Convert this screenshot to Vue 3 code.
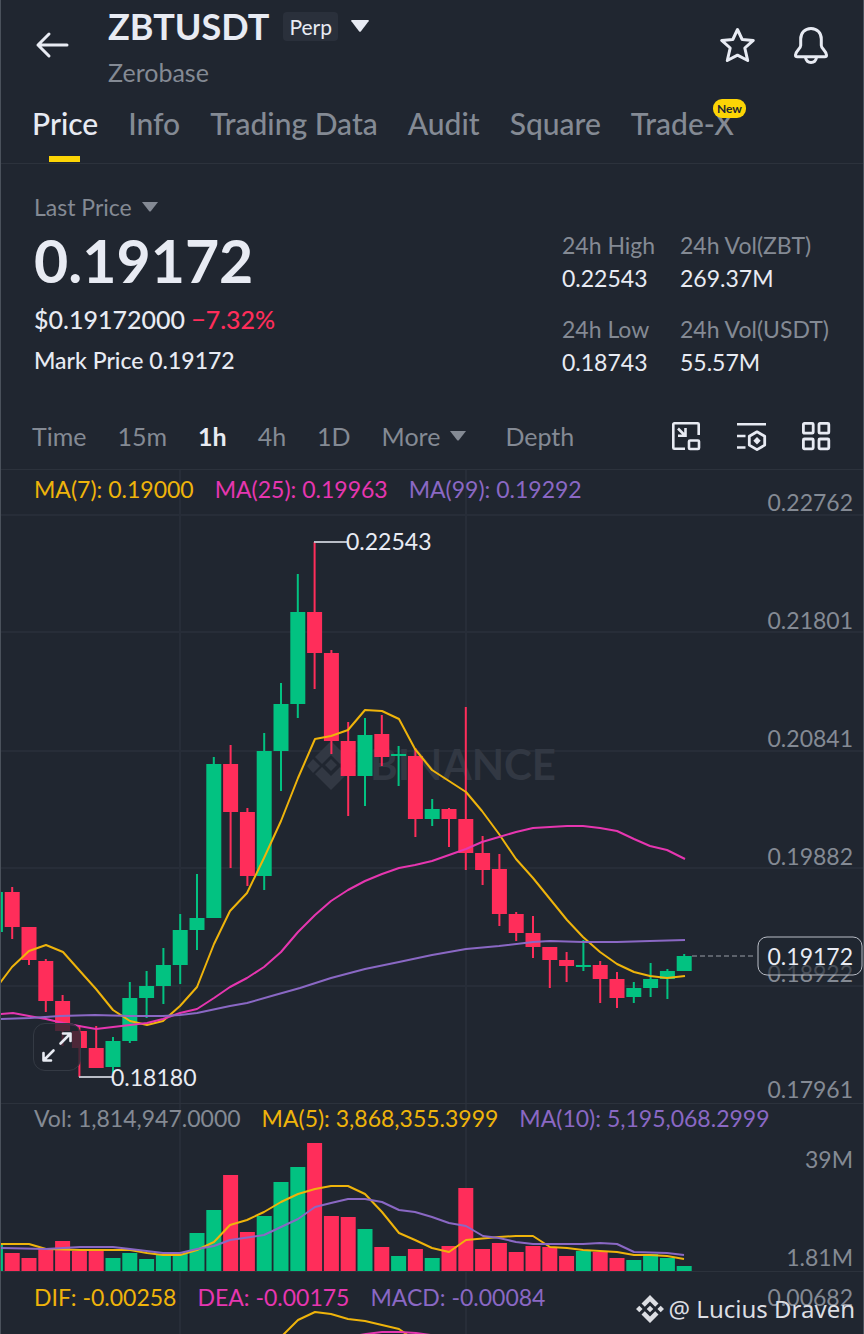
<script setup>
import { ref } from 'vue'

const tabs = ['Price', 'Info', 'Trading Data', 'Audit', 'Square', 'Trade-X']
const activeTab = ref('Price')

const intervals = ['Time', '15m', '1h', '4h', '1D']
const activeInterval = ref('1h')

const stats = [
  { label: '24h High', value: '0.22543' },
  { label: '24h Vol(ZBT)', value: '269.37M' },
  { label: '24h Low', value: '0.18743' },
  { label: '24h Vol(USDT)', value: '55.57M' },
]

const PITCH = 16.8
const BODY = 15
const centre = (i) => 12.2 + PITCH * (i - 1)

// direction, high, body top, body bottom, low, volume top
const rows = [
  ['up', 891, 891, 931, 931, 1243],
  ['down', 886, 891, 926, 938, 1252],
  ['down', 926, 926, 959, 964, 1257],
  ['down', 958, 960, 1000, 1011, 1247],
  ['down', 994, 1000, 1030, 1045, 1240],
  ['down', 1024, 1030, 1047, 1076, 1250],
  ['down', 1025, 1047, 1067, 1067, 1250],
  ['up', 1036, 1040, 1066, 1072, 1257],
  ['up', 981, 997, 1040, 1042, 1252],
  ['up', 970, 985, 997, 1017, 1258],
  ['up', 947, 964, 985, 1003, 1254],
  ['up', 913, 929, 964, 983, 1253],
  ['up', 873, 917, 929, 949, 1232],
  ['up', 756, 763, 917, 917, 1209],
  ['down', 744, 763, 811, 867, 1174],
  ['down', 807, 811, 875, 885, 1231],
  ['up', 732, 750, 875, 889, 1215],
  ['up', 682, 703, 750, 790, 1181],
  ['up', 573, 611, 703, 717, 1166],
  ['down', 541, 611, 652, 688, 1142],
  ['down', 649, 652, 740, 753, 1215],
  ['down', 721, 740, 775, 815, 1216],
  ['up', 717, 734, 775, 805, 1228],
  ['down', 714, 733, 756, 765, 1246],
  ['up', 745, 753, 755, 785, 1255],
  ['down', 747, 755, 818, 836, 1248],
  ['up', 798, 808, 818, 825, 1257],
  ['down', 807, 808, 818, 846, 1245],
  ['down', 706, 818, 852, 869, 1187],
  ['down', 835, 852, 869, 884, 1248],
  ['down', 853, 868, 913, 925, 1242],
  ['down', 911, 913, 932, 940, 1251],
  ['down', 915, 932, 946, 957, 1245],
  ['down', 946, 946, 959, 987, 1246],
  ['down', 951, 959, 965, 981, 1255],
  ['up', 939, 964, 966, 970, 1250],
  ['down', 960, 964, 978, 1002, 1251],
  ['down', 971, 978, 997, 1007, 1257],
  ['up', 981, 987, 996, 1002, 1259],
  ['up', 962, 978, 987, 996, 1253],
  ['up', 968, 970, 978, 998, 1257],
  ['up', 953, 955, 970, 970, 1265],
]
const candles = rows.map(([dir, high, top, bottom, low, volume], i) => ({
  dir, high, top, bottom, low, volume, x: centre(i),
}))

const priceTicks = [
  { y: 502, text: '0.22762' },
  { y: 620, text: '0.21801' },
  { y: 738, text: '0.20841' },
  { y: 856, text: '0.19882' },
  { y: 973, text: '0.18922' },
  { y: 1089, text: '0.17961' },
]
const gridRows = [514, 631, 750, 867, 985]
const gridCols = [180, 466]

const ma7 = '0,982 12,966 29,950 46,944 63,951 79,969 96,988 113,1009 130,1020 147,1024 163,1020 180,1005 197,986 214,943 230,910 247,892 264,857 281,820 298,777 315,738 331,735 348,729 365,709 382,710 399,718 415,748 432,769 449,780 466,791 482,810 499,833 516,858 533,877 550,898 567,919 583,936 600,951 617,963 634,971 650,975 667,977 685,975'
const ma25 = '0,1013 13,1012 29,1015 46,1018 63,1022 79,1025 96,1028 113,1026 130,1024 147,1022 163,1018 180,1012 197,1008 214,997 230,986 247,977 264,966 281,951 298,931 315,914 331,900 348,889 365,880 382,873 399,867 415,864 432,860 449,854 466,848 482,841 499,836 516,831 533,827 550,826 567,825 583,825 600,827 617,830 634,838 650,845 667,849 685,858'
const ma99 = '0,1018 30,1017 60,1015 95,1014 130,1015 163,1015 180,1014 197,1012 230,1005 247,1002 275,994 300,987 331,977 365,968 399,961 432,954 466,948 499,945 533,941 550,940 583,941 617,941 650,940 685,939'
const vol5 = '0,1243 29,1243 46,1248 80,1249 105,1249 130,1249 147,1252 163,1254 180,1254 197,1249 214,1241 230,1224 247,1219 264,1211 281,1201 298,1193 315,1188 331,1185 348,1185 365,1193 382,1211 399,1232 415,1239 432,1247 449,1251 466,1239 499,1236 516,1235 533,1235 550,1246 567,1247 583,1249 600,1250 617,1251 634,1254 650,1254 667,1255 684,1258'
const vol10 = '0,1247 46,1248 63,1247 80,1246 113,1246 130,1248 163,1252 180,1252 197,1248 214,1245 230,1239 264,1234 298,1218 315,1206 331,1202 348,1198 365,1198 382,1201 399,1209 415,1211 432,1216 449,1222 466,1225 483,1235 499,1237 516,1241 533,1243 583,1243 600,1242 617,1243 634,1251 667,1252 684,1254'
</script>

<template>
  <main class="screen">
    <header class="top">
      <button class="plain back" aria-label="Back">
        <svg width="34" height="28" viewBox="0 0 34 28" fill="none" stroke="currentColor" stroke-width="3" stroke-linecap="round" stroke-linejoin="round">
          <path d="M32 14H3M14 3 3 14l11 11" />
        </svg>
      </button>
      <div class="names">
        <div class="symbol">
          <h1>ZBTUSDT</h1>
          <span class="perp">Perp</span>
          <button class="plain pick" aria-label="Choose market">
            <svg width="20" height="14" viewBox="0 0 20 14" fill="currentColor"><path d="M2 1h16q1.500 0 .6 1.200L11 12.200q-1 1-2 0L1.400 2.200Q.5 1 2 1z" /></svg>
          </button>
        </div>
        <p class="project">Zerobase</p>
      </div>
      <div class="actions">
        <button class="plain" aria-label="Favourite">
          <svg width="38" height="38" viewBox="0 0 38 38" fill="none" stroke="currentColor" stroke-width="3" stroke-linejoin="round">
            <path d="M19.500 3.500l4.700 10 11.100.9-8.500 7.600 2.900 12.500-10.200-5.300-10.200 5.300 2.900-12.500-8.500-7.600 11.100-.9z" />
          </svg>
        </button>
        <button class="plain" aria-label="Alerts">
          <svg width="38" height="38" viewBox="0 0 38 38" fill="none" stroke="currentColor" stroke-width="3" stroke-linejoin="round" stroke-linecap="round">
            <path d="M19 2.500c-6.300 0-10.300 4.600-10.300 10.500v6.500c0 3-4.900 5.200-5.200 9.500-.1 1.200.5 1.700 1.700 1.700h27.600c1.200 0 1.800-.5 1.700-1.700-.3-4.300-5.200-6.500-5.200-9.500V13c0-5.900-4-10.500-10.300-10.500z" />
            <path d="M13.500 31.500c.6 3.200 2.700 5 5.500 5s4.900-1.800 5.500-5" />
          </svg>
        </button>
      </div>
    </header>

    <nav class="tabs">
      <button v-for="t in tabs" :key="t" class="plain tab" :class="{ on: t === activeTab }" @click="activeTab = t">
        {{ t }}<span v-if="t === 'Trade-X'" class="new">New</span>
      </button>
    </nav>

    <section class="overview">
      <div class="quote">
        <button class="plain kind">Last Price
          <svg width="16" height="10" viewBox="0 0 16 10" fill="currentColor"><path d="M0 0h16L9 9q-1 1-2 0z" /></svg>
        </button>
        <p class="last">0.19172</p>
        <p class="fiat">$0.19172000 <span class="change">−7.32%</span></p>
        <p class="mark">Mark Price 0.19172</p>
      </div>
      <dl class="stats">
        <div v-for="s in stats" :key="s.label">
          <dt>{{ s.label }}</dt>
          <dd>{{ s.value }}</dd>
        </div>
      </dl>
    </section>

    <div class="toolbar">
      <div class="intervals">
        <button v-for="i in intervals" :key="i" class="plain" :class="{ on: i === activeInterval }" @click="activeInterval = i">{{ i }}</button>
        <button class="plain more">More
          <svg width="16" height="10" viewBox="0 0 16 10" fill="currentColor"><path d="M0 0h16L9 9q-1 1-2 0z" /></svg>
        </button>
        <button class="plain depth">Depth</button>
      </div>
      <div class="tools">
        <button class="plain" aria-label="Floating window">
          <svg width="30" height="30" viewBox="0 0 30 30" fill="none" stroke="currentColor" stroke-width="2.600">
            <path d="M27.700 14V3.300a1 1 0 0 0-1-1H3.300a1 1 0 0 0-1 1v23.400a1 1 0 0 0 1 1H14" />
            <rect x="18" y="19.500" width="10" height="8.500" rx="1" />
            <path d="M7 7.500l6.500 6.500M14.500 7v7.800H7" />
          </svg>
        </button>
        <button class="plain" aria-label="Indicator settings">
          <svg width="32" height="30" viewBox="0 0 32 30" fill="none" stroke="currentColor" stroke-width="2.800" stroke-linejoin="round">
            <path d="M2 3.300h29M2 15h8.500M2 26.500h8.500" stroke-width="2.600" />
            <path d="M22 10.800l7.700 4.500v8.800L22 28.600l-7.700-4.500v-8.800z" />
            <path d="M22 16l3.700 3.700-3.700 3.700-3.700-3.700z" fill="currentColor" stroke="none" />
          </svg>
        </button>
        <button class="plain" aria-label="Layout">
          <svg width="30" height="30" viewBox="0 0 30 30" fill="none" stroke="currentColor" stroke-width="2.800">
            <rect x="2.400" y="2.400" width="9.800" height="9.800" rx="1" /><rect x="18" y="2.400" width="9.800" height="9.800" rx="1" />
            <rect x="2.400" y="18" width="9.800" height="9.800" rx="1" /><rect x="18" y="18" width="9.800" height="9.800" rx="1" />
          </svg>
        </button>
      </div>
    </div>

    <section class="pane">
      <svg class="plot" viewBox="1 469 862 634" role="img" aria-label="Hourly price candles">
        <g class="grid">
          <line v-for="y in gridRows" :key="y" x1="0" x2="864" :y1="y" :y2="y" />
          <line v-for="x in gridCols" :key="x" :x1="x" :x2="x" y1="469" y2="1103" />
        </g>
        <g class="brand">
          <path d="M331 740l16 16-7 7-9-9-9 9-7-7zM331 789l16-16-7-7-9 9-9-9-7 7zM313 758l7 7-7 7-6-7zM349 758l7 7-7 7-6-7zM331 758l6 6-6 6-6-6z" />
          <text x="370" y="779">BINANCE</text>
        </g>
        <g v-for="c in candles" :key="c.x" :class="c.dir">
          <rect :x="c.x - 1" :y="c.high" width="2" :height="c.low - c.high" />
          <rect :x="c.x - BODY / 2" :y="c.top" :width="BODY" :height="c.bottom - c.top" />
        </g>
        <polyline class="line yellow" :points="ma7" />
        <polyline class="line pink" :points="ma25" />
        <polyline class="line purple" :points="ma99" />
        <path class="leader" d="M314 541h33M79 1076h34" />
        <text class="callout" x="346" y="549">0.22543</text>
        <text class="callout" x="111" y="1085">0.18180</text>
        <text v-for="t in priceTicks" :key="t.text" class="tick" x="853" :y="t.y + 8">{{ t.text }}</text>
        <path class="dash" d="M692 955h63" />
        <rect class="tag" x="758" y="936" width="104" height="38" rx="9" />
        <text class="tag-text" x="853" y="964">0.19172</text>
      </svg>
      <p class="legend">
        <span class="c-yellow">MA(7): 0.19000</span>
        <span class="c-pink">MA(25): 0.19963</span>
        <span class="c-purple">MA(99): 0.19292</span>
      </p>
      <button class="plain expand" aria-label="Full screen">
        <svg width="32" height="32" viewBox="0 0 32 32" fill="none" stroke="currentColor" stroke-width="2.600" stroke-linecap="round" stroke-linejoin="round">
          <path d="M19.500 12.500L29 3M22 2.500h7.500V10M12.500 19.500L3 29M2.500 22v7.500H10" />
        </svg>
      </button>
    </section>

    <section class="pane">
      <svg class="plot" viewBox="1 1103 862 168" role="img" aria-label="Hourly volume">
        <g class="grid"><line v-for="x in gridCols" :key="x" :x1="x" :x2="x" y1="1103" y2="1271" /></g>
        <rect v-for="c in candles" :key="c.x" :class="c.dir" :x="c.x - BODY / 2" :y="c.volume" :width="BODY" :height="1271 - c.volume" />
        <polyline class="line yellow" :points="vol5" />
        <polyline class="line purple" :points="vol10" />
        <text class="tick" x="853" y="1167">39M</text>
        <text class="tick" x="853" y="1265">1.81M</text>
      </svg>
      <p class="legend">
        <span class="c-muted">Vol: 1,814,947.0000</span>
        <span class="c-yellow">MA(5): 3,868,355.3999</span>
        <span class="c-purple">MA(10): 5,195,068.2999</span>
      </p>
    </section>

    <section class="pane">
      <svg class="plot" viewBox="1 1271 862 63" role="img" aria-label="MACD">
        <g class="grid"><line v-for="x in gridCols" :key="x" :x1="x" :x2="x" y1="1271" y2="1335" /></g>
        <polyline class="line yellow" points="282,1335 298,1319 315,1311 331,1313 348,1318 365,1320 382,1324 399,1328 409,1335" />
        <polyline class="line pink" points="354,1335 366,1333 382,1331 400,1331 416,1332 438,1335" />
        <text class="tick" x="853" y="1305">0.00682</text>
      </svg>
      <p class="legend">
        <span class="c-yellow">DIF: -0.00258</span>
        <span class="c-pink">DEA: -0.00175</span>
        <span class="c-purple">MACD: -0.00084</span>
      </p>
      <p class="author">
        <svg width="28" height="28" viewBox="0 0 28 28" fill="currentColor">
          <path d="M14 0l8.500 8.500-3.300 3.300L14 6.600l-5.200 5.200-3.300-3.300zM14 28l8.500-8.500-3.300-3.300L14 21.400l-5.200-5.200-3.300 3.300zM3.300 10.700L6.600 14l-3.300 3.300L0 14zM24.700 10.700L28 14l-3.300 3.300-3.300-3.300zM14 10.700l3.300 3.300-3.300 3.300-3.300-3.300z" />
        </svg>
        @ Lucius Draven
      </p>
    </section>
  </main>
</template>

<style>
html,
body {
  background: #202630;
}
</style>

<style scoped>
.screen {
  box-sizing: border-box;
  border: solid #4a515b;
  border-width: 0 1px;
  background: #202630;
  color: #e8ebf3;
  font-family: Lato, "Open Sans", sans-serif;
  font-size: 23px;
  line-height: 32px;
  overflow: hidden;
}
p, h1, dl, dd {
  margin: 0;
}
svg {
  display: block;
  flex: none;
}
.plain {
  display: flex;
  align-items: center;
  margin: 0;
  padding: 0;
  border: 0;
  background: none;
  color: inherit;
  font: inherit;
  white-space: nowrap;
}
.top {
  display: flex;
  align-items: flex-start;
  padding: 7px 33px 0 34px;
}
.back {
  width: 73px;
  height: 76px;
}
.names {
  flex: 1;
}
.symbol {
  display: flex;
  align-items: center;
  height: 38px;
}
h1 {
  font-size: 36px;
  line-height: 38px;
  font-weight: 700;
}
.perp {
  margin: 0 12px 0 14px;
  padding: 0 6px;
  border-radius: 4px;
  background: #2a303b;
  font-size: 21px;
  line-height: 29px;
}
.project {
  margin-top: 11px;
  color: #848a94;
  font-size: 25px;
}
.actions {
  display: flex;
  gap: 36px;
  padding-top: 19px;
}
.tabs {
  display: flex;
  gap: 30px;
  height: 73px;
  margin-top: 2px;
  padding: 0 31px;
  border-bottom: 1px solid #2c323c;
}
.tab {
  position: relative;
  height: 66px;
  color: #848a94;
  font-size: 30px;
  font-weight: 500;
}
.tab.on {
  color: #e8ebf3;
}
.tab.on::after {
  content: "";
  position: absolute;
  left: 50%;
  bottom: -6px;
  width: 31px;
  height: 6px;
  margin-left: -16px;
  background: #fcd405;
}
.new {
  position: absolute;
  top: 9px;
  right: -12px;
  padding: 0 4px;
  border-radius: 9px;
  background: #fcd405;
  color: #202630;
  font-size: 12px;
  line-height: 19px;
  font-weight: 700;
}
.overview {
  display: flex;
  justify-content: space-between;
  padding: 27px 33px 26px;
}
.kind {
  gap: 10px;
  color: #848a94;
}
.last {
  margin-top: 6px;
  font-size: 59px;
  line-height: 64px;
  font-weight: 700;
}
.fiat {
  margin-top: 10px;
  font-size: 25px;
  font-weight: 500;
}
.change {
  color: #ff2d5a;
}
.mark {
  margin-top: 9px;
  font-weight: 500;
}
.stats {
  display: grid;
  grid-template-columns: 118px 150px;
  row-gap: 18px;
  align-content: start;
  padding-top: 38px;
  line-height: 33px;
}
dt {
  color: #848a94;
  white-space: nowrap;
}
.toolbar {
  display: flex;
  align-items: center;
  justify-content: space-between;
  height: 65px;
  padding: 0 32px 3px 31px;
  border-bottom: 1px solid #2c323c;
  box-sizing: border-box;
}
.intervals {
  display: flex;
  gap: 31px;
  color: #848a94;
}
.intervals .plain {
  font-size: 25px;
}
.intervals .on {
  color: #e8ebf3;
  font-weight: 700;
}
.more {
  gap: 10px;
}
.depth {
  margin-left: 8px;
}
.tools {
  display: flex;
  gap: 34px;
}
.pane {
  position: relative;
}
.pane + .pane {
  box-shadow: 0 -1px #2c323c;
}
.plot {
  width: 100%;
  height: auto;
  font-size: 23px;
}
.legend {
  position: absolute;
  top: 3px;
  left: 33px;
  display: flex;
  gap: 21px;
  white-space: nowrap;
}
.pane + .pane .legend {
  top: -2px;
}
.pane + .pane:last-child .legend {
  top: 9px;
}
.c-yellow { color: #efb40b; }
.c-pink { color: #e636b0; }
.c-purple { color: #8a68c4; }
.c-muted { color: #848a94; }
.grid line {
  stroke: #272d38;
  stroke-width: 2;
}
.brand {
  fill: #323843;
  font-size: 42px;
  font-weight: 700;
}
.up { fill: #02c281; }
.down { fill: #ff2d5a; }
.line {
  fill: none;
  stroke-width: 2;
  stroke-linejoin: round;
}
.yellow { stroke: #efb40b; }
.pink { stroke: #e636b0; }
.purple { stroke: #8a68c4; }
.leader {
  fill: none;
  stroke: #b9bdc6;
  stroke-width: 2;
}
.callout {
  fill: #e8ebf3;
}
.tick {
  fill: #848a94;
  text-anchor: end;
}
.dash {
  stroke: #989da6;
  stroke-width: 1;
  stroke-dasharray: 5 3;
}
.tag {
  fill: #202630;
  fill-opacity: 0.6;
  stroke: #b9bdc6;
  stroke-width: 1;
}
.tag-text {
  fill: #e8ebf3;
  text-anchor: end;
}
.expand {
  position: absolute;
  left: 32px;
  bottom: 33px;
  justify-content: center;
  width: 48px;
  height: 48px;
  border: 1px solid #343a44;
  border-radius: 12px;
  background: rgba(32, 38, 48, 0.8);
}
.author {
  position: absolute;
  right: 8px;
  bottom: 10px;
  display: flex;
  align-items: center;
  gap: 5px;
  color: #dcdee3;
  font-family: "Noto Sans", sans-serif;
  font-size: 24px;
  white-space: nowrap;
}
</style>
